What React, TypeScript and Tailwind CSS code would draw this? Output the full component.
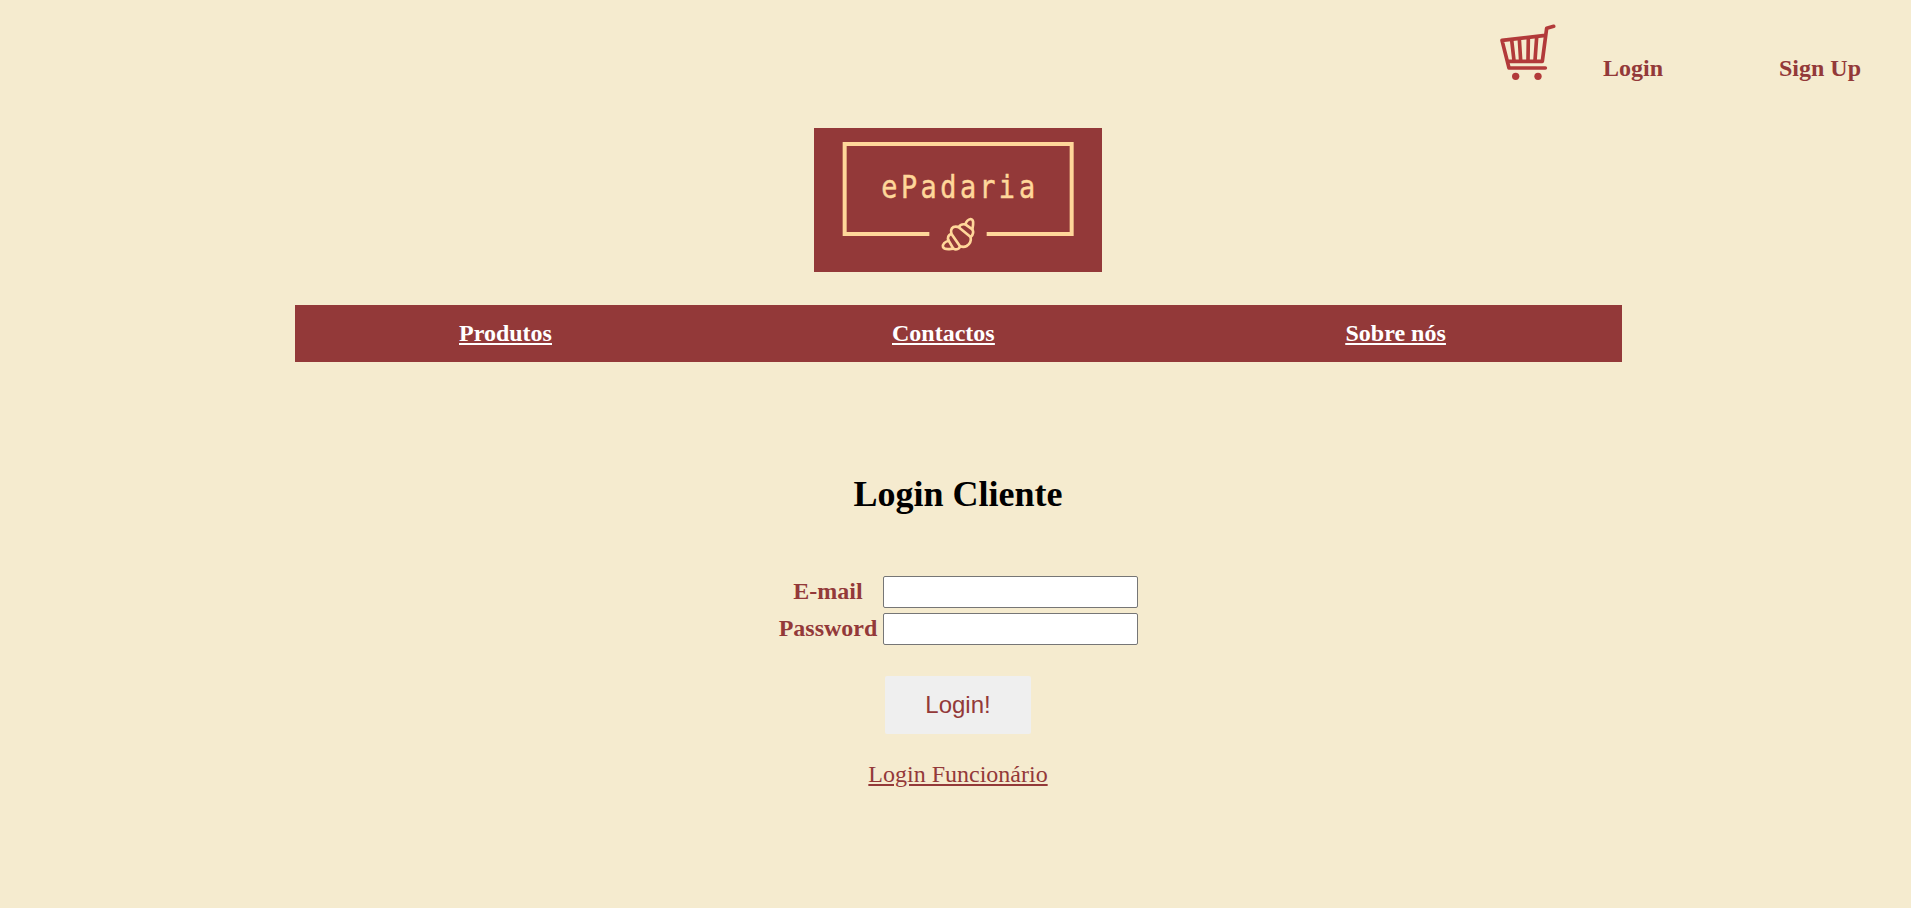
import React from "react";

function CartIcon() {
  return (
    <svg
      viewBox="0 0 300 270"
      className="h-[90px] w-[100px]"
      fill="none"
      stroke="#b23a3a"
      strokeWidth="11"
      strokeLinecap="round"
      strokeLinejoin="round"
    >
      <path d="M221 49L200 55L187 154H85M196 76L66 91L87 174H196" />
      <path d="M95 90L102 152M118 87L122 152M145 85L144 152M170 82L165 152" />
      <circle cx="107" cy="199" r="11" fill="#b23a3a" stroke="none" />
      <circle cx="174" cy="199" r="11" fill="#b23a3a" stroke="none" />
    </svg>
  );
}

function Logo() {
  return (
    <svg viewBox="42 24 864 432" className="h-36 w-72 bg-[#933939]" fill="none" stroke="#ffd79a">
      <path d="M388 342H134V72H815V342H560" strokeWidth="12" />
      <text
        x="290 361 430 501 571 640 710 782"
        y="234"
        transform="scale(0.84 1)"
        fill="#ffd79a"
        strokeWidth="1.5"
        fontSize="96"
        fontFamily="'DejaVu Sans Mono', monospace"
      >
        ePadaria
      </text>
      <g strokeWidth="8" strokeLinecap="round" strokeLinejoin="round">
        <path d="M496 313C499 304 505 298 512 297C521 298 521 309 517 328" />
        <path d="M477 321C480 313 488 312 496 313L517 328C522 336 519 344 512 351" />
        <path d="M454 341C450 327 458 320 467 320C471 320 475 321 478 323L512 351C514 363 508 373 500 378C493 382 487 381 480 379Z" />
        <path d="M454 341C445 345 441 353 446 362L460 386C469 391 478 387 480 379" />
        <path d="M446 362C435 365 427 373 429 381C433 391 448 387 460 386" />
      </g>
    </svg>
  );
}

function Field({ label, type }: { label: string; type: string }) {
  return (
    <label className="flex h-8 items-center gap-[5px]">
      <span className="w-[100px] pb-[2px] text-center font-bold leading-7">{label}</span>
      <input
        type={type}
        className="h-8 w-[255px] rounded-[2px] border border-[#767676] bg-white px-1 outline-none"
      />
    </label>
  );
}

export default function App() {
  return (
    <div className="flex h-[908px] flex-col items-center overflow-hidden bg-[#f5ebcf] font-['Liberation_Serif',serif] text-2xl leading-7 text-[#933939]">
      <header className="flex h-32 w-full justify-end pt-[10px] pr-[50px] font-bold">
        <CartIcon />
        <a href="#" className="mt-11 ml-[23px] w-44">Login</a>
        <a href="#" className="mt-11 w-[82px] whitespace-nowrap">Sign Up</a>
      </header>
      <div className="flex w-full justify-center pl-[5px]">
        <Logo />
      </div>
      <nav className="mt-[33px] ml-[6px] flex h-[57px] w-[1327px] shrink-0 bg-[#933939] pt-[14px] font-bold text-white underline">
        <a href="#" className="ml-[164px] w-[433px]">Produtos</a>
        <a href="#" className="w-[453.5px]">Contactos</a>
        <a href="#">Sobre nós</a>
      </nav>
      <main className="flex w-full flex-col items-center pl-[5px]">
        <h1 className="mt-[112px] text-4xl font-bold leading-[40px] text-black">Login Cliente</h1>
        <form className="mt-[62px] flex flex-col items-center" onSubmit={(e) => e.preventDefault()}>
          <div className="flex flex-col gap-[5px]">
            <Field label="E-mail" type="email" />
            <Field label="Password" type="password" />
          </div>
          <button className="mt-[31px] h-[58px] w-[146px] rounded-[2px] bg-[#efefef] font-['Liberation_Sans',sans-serif]">
            Login!
          </button>
        </form>
        <a href="#" className="mt-[26px] underline">Login Funcionário</a>
      </main>
    </div>
  );
}
